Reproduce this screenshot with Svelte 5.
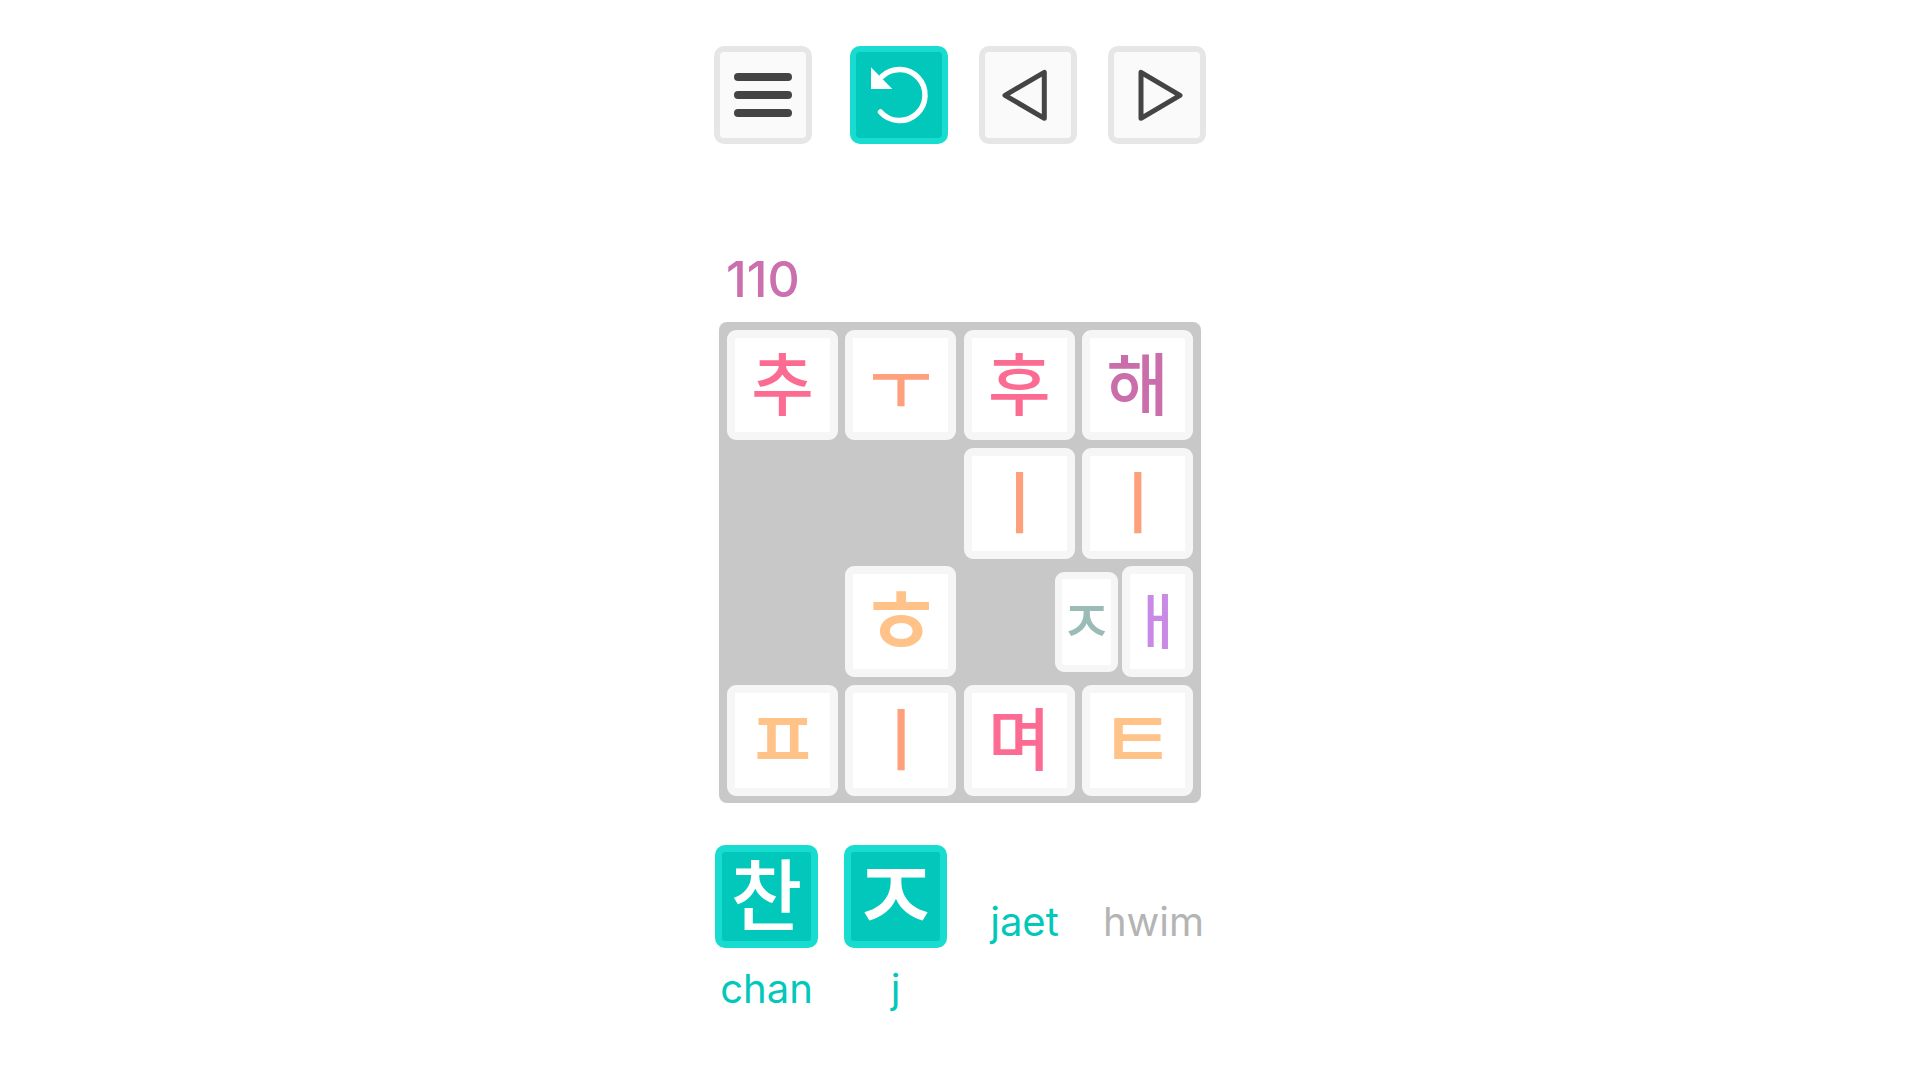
<script>
	const rows = [
		[{ ch: '추', c: 'pink' }, { ch: 'ㅜ', c: 'coral' }, { ch: '후', c: 'pink' }, { ch: '해', c: 'plum' }],
		[null, null, { ch: 'ㅣ', c: 'coral' }, { ch: 'ㅣ', c: 'coral' }],
		[null, { ch: 'ㅎ', c: 'peach cons wide' }, 'split'],
		[{ ch: 'ㅍ', c: 'peach cons' }, { ch: 'ㅣ', c: 'coral' }, { ch: '며', c: 'pink' }, { ch: 'ㅌ', c: 'peach cons' }]
	];

	const syllables = [
		{ tile: '찬', word: 'chan' },
		{ tile: 'ㅈ', word: 'j', cons: true },
		{ word: 'jaet' },
		{ word: 'hwim', muted: true }
	];
</script>

<main>
	<nav class="toolbar">
		<button class="btn" aria-label="Menu">
			<svg viewBox="0 0 86 86">
				<rect x="14" y="21" width="58" height="8" rx="4" />
				<rect x="14" y="39" width="58" height="8" rx="4" />
				<rect x="14" y="57" width="58" height="8" rx="4" />
			</svg>
		</button>
		<button class="btn active" aria-label="Restart">
			<svg viewBox="0 0 86 86">
				<path class="line" d="M24.5 60A25.5 25.5 0 1 0 26 24.5" />
				<polygon class="head" points="15,15.3 15,37 36.3,37" />
			</svg>
		</button>
		<button class="btn" aria-label="Previous">
			<svg viewBox="0 0 86 86"><polygon class="tri" points="59.3,20.3 59.3,66.3 20,43.3" /></svg>
		</button>
		<button class="btn" aria-label="Next">
			<svg viewBox="0 0 86 86"><polygon class="tri" points="27,20.3 27,66.3 66,43.3" /></svg>
		</button>
	</nav>

	<div class="score">110</div>

	<div class="board">
		{#each rows as row}
			{#each row as cell}
				{#if cell === 'split'}
					<div class="split">
						<div class="tile moving"><span class="teal">ㅈ</span></div>
						<div class="tile narrow"><span class="lilac">ㅐ</span></div>
					</div>
				{:else if cell}
					<div class="tile"><span class={cell.c}>{cell.ch}</span></div>
				{:else}
					<div></div>
				{/if}
			{/each}
		{/each}
	</div>

	<div class="syllables">
		{#each syllables as s}
			<div class="syllable">
				<div class="slot">
					{#if s.tile}
						<div class="big" class:cons={s.cons}>{s.tile}</div>
					{:else}
						<span class="word plain" class:muted={s.muted}>{s.word}</span>
					{/if}
				</div>
				{#if s.tile}
					<span class="word under">{s.word}</span>
				{/if}
			</div>
		{/each}
	</div>
</main>

<style>
	:global(body) {
		background: #fff;
	}

	main {
		display: flex;
		flex-direction: column;
		width: 492px;
		margin: 0 auto;
		padding-top: 46px;
		font-family: 'Inter', 'Noto Sans CJK KR', sans-serif;
	}

	.toolbar {
		display: flex;
		gap: 31px;
	}

	.btn {
		width: 98px;
		height: 98px;
		box-sizing: border-box;
		padding: 0;
		background: #fafafa;
		border: 6px solid #e6e6e6;
		border-radius: 10px;
	}

	.btn:first-child {
		margin-right: 7px;
	}

	.btn svg {
		display: block;
		width: 86px;
		height: 86px;
	}

	.btn rect {
		fill: #444;
	}

	.btn.active {
		background: #02c8bb;
		border-color: #17dccf;
	}

	.line {
		fill: none;
		stroke: #fff;
		stroke-width: 5.5;
		stroke-linecap: round;
	}

	.head {
		fill: #fff;
	}

	.tri {
		fill: none;
		stroke: #444;
		stroke-width: 5;
		stroke-linejoin: round;
	}

	.score {
		margin: 106px 0 14px 12px;
		font-size: 50px;
		font-weight: 500;
		line-height: 58px;
		color: #cb6fae;
	}

	.board {
		display: grid;
		grid-template-columns: repeat(4, 110.7px);
		grid-auto-rows: 110.7px;
		gap: 7.7px;
		align-self: center;
		padding: 7.7px;
		background: #c8c8c8;
		border-radius: 8px;
	}

	.tile {
		display: flex;
		align-items: center;
		justify-content: center;
		box-sizing: border-box;
		background: #fff;
		border: 8px solid #f6f6f6;
		border-radius: 9px;
		font-size: 68px;
		font-weight: 500;
		line-height: 1;
	}

	.tile .cons {
		font-size: 82px;
	}

	.tile .wide {
		font-size: 92px;
	}

	.split {
		grid-column: span 2;
		display: flex;
		align-items: center;
		justify-content: flex-end;
		gap: 4px;
	}

	.moving {
		width: 63px;
		height: 100px;
		border-width: 7px;
		font-size: 59px;
	}

	.narrow {
		width: 71px;
		height: 110.7px;
		font-size: 60px;
	}

	.pink { color: #fb6b92; }
	.coral { color: #ffa07c; }
	.peach { color: #ffc288; }
	.plum { color: #c96dab; }
	.teal { color: #9bbcb6; }
	.lilac { color: #c88ae4; }

	.syllables {
		display: grid;
		grid-template-columns: repeat(4, 103px);
		column-gap: 26px;
		margin: 42px 0 0 1px;
	}

	.syllable {
		display: flex;
		flex-direction: column;
		align-items: center;
	}

	.slot {
		display: flex;
		align-items: flex-end;
		justify-content: center;
		height: 103px;
	}

	.big {
		display: flex;
		align-items: center;
		justify-content: center;
		box-sizing: border-box;
		width: 103px;
		height: 103px;
		background: #02c8bb;
		border: 7px solid #17dccf;
		border-radius: 10px;
		color: #fff;
		font-size: 78px;
		font-weight: 500;
		line-height: 1;
	}

	.big.cons {
		font-size: 101px;
	}

	.word {
		font-size: 40px;
		line-height: 46px;
		color: #02c8bb;
	}

	.plain {
		padding-bottom: 3px;
	}

	.under {
		margin-top: 18px;
	}

	.muted {
		color: #b4b4b4;
	}
</style>
